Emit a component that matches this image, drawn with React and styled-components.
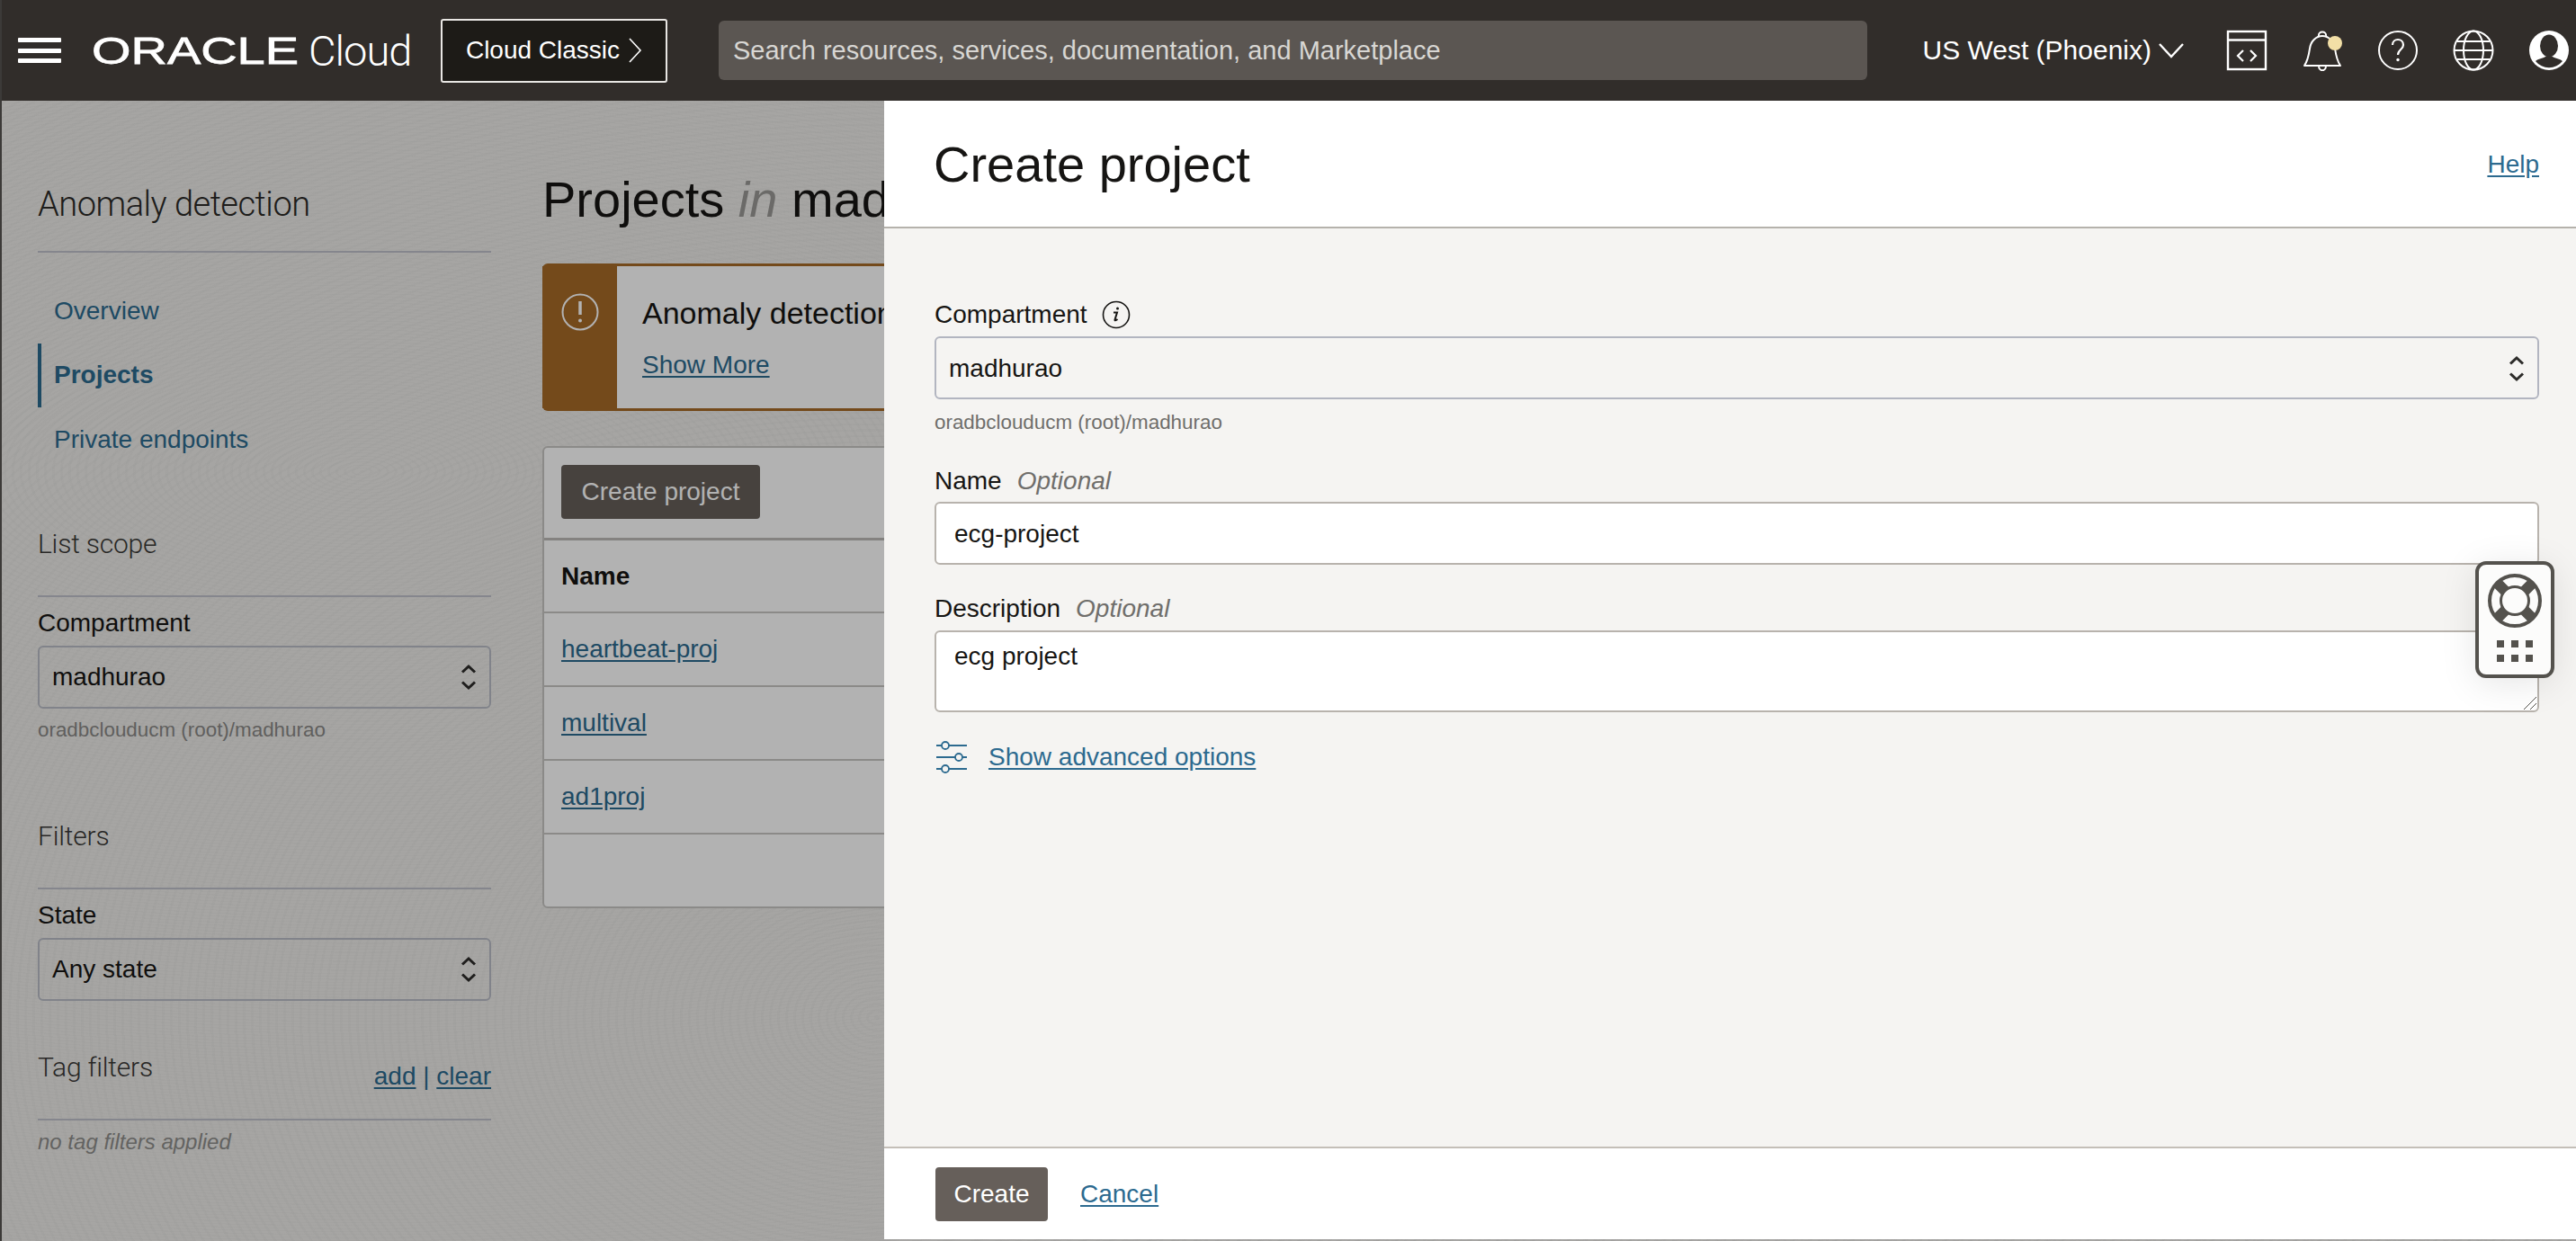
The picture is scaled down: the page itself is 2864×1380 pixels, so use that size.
import React from 'react'
import styled, { createGlobalStyle } from 'styled-components'

const GlobalStyle = createGlobalStyle`
  html, body {
    margin: 0;
    height: 100%;
    overflow: hidden;
  }
  body {
    font-family: "Liberation Sans", Arial, sans-serif;
    font-size: 28px;
    color: #161513;
  }
  * { box-sizing: border-box; }
`

const Page = styled.div`
  position: relative;
  height: 100vh;
  display: flex;
  flex-direction: column;
  overflow: hidden;
  border-left: 2px solid #3c3a38;
  background-color: #eeedea;
  background-image:
    repeating-radial-gradient(ellipse 52% 40% at 14% 38%, rgba(0,0,0,0.014) 0 3px, rgba(255,255,255,0.014) 3px 9px),
    repeating-radial-gradient(ellipse 30% 46% at 34% 82%, rgba(0,0,0,0.014) 0 3px, rgba(255,255,255,0.014) 3px 9px);
`

const TopBar = styled.header`
  flex: none;
  height: 112px;
  display: flex;
  align-items: center;
  padding: 0 7px 0 18px;
  background: #312d2a;
  color: #fff;
`

const Burger = styled.div`
  width: 48px;
  height: 28px;
  display: flex;
  flex-direction: column;
  justify-content: space-between;
  margin-right: 34px;

  span {
    display: block;
    height: 5px;
    border-radius: 1px;
    background: #fff;
  }
`

const Logo = styled.div`
  display: flex;
  align-items: center;
  width: 388px;
  gap: 11px;

  svg {
    overflow: visible;
  }
`

const CloudWord = styled.span`
  font-family: Roboto, "Liberation Sans", sans-serif;
  font-weight: 300;
  font-size: 47px;
  letter-spacing: -1px;
  line-height: 1;
`

const ClassicButton = styled.div`
  width: 252px;
  height: 71px;
  display: flex;
  align-items: center;
  justify-content: center;
  gap: 9px;
  border: 2px solid #e8e6e3;
  border-radius: 3px;
  background: #1d1b17;
  font-size: 28px;
`

const Search = styled.div`
  flex: 1;
  height: 66px;
  margin: 0 61px 0 57px;
  padding-left: 16px;
  display: flex;
  align-items: center;
  border-radius: 6px;
  background: #5b5652;
  color: #d8d6d3;
  font-size: 29px;
`

const Region = styled.div`
  display: flex;
  align-items: center;
  gap: 7px;
  margin-right: 46px;
  font-size: 30px;
`

const IconRow = styled.div`
  display: flex;
  gap: 38px;

  svg {
    display: block;
    width: 46px;
    height: 46px;
  }
`

const Workspace = styled.div`
  flex: 1;
  display: flex;
  min-height: 0;
  padding-left: 40px;
`

const Sidebar = styled.aside`
  flex: none;
  width: 504px;
  padding-top: 93px;
`

const ProductTitle = styled.h2`
  margin: 0;
  height: 76px;
  border-bottom: 2px solid #bfc1cb;
  font-family: Roboto, "Liberation Sans", sans-serif;
  font-weight: 300;
  font-size: 38px;
  line-height: 44px;
  letter-spacing: -0.5px;
  color: #2b2a28;
`

const Nav = styled.nav`
  margin: 29px 0 0;
`

const NavItem = styled.a`
  display: flex;
  align-items: center;
  height: 71.5px;
  padding-left: 14px;
  border-left: 4px solid ${p => (p.$active ? '#2c6a8f' : 'transparent')};
  color: #2c6a8f;
  font-weight: ${p => (p.$active ? 700 : 400)};
`

const SectionHead = styled.div`
  display: flex;
  justify-content: space-between;
  margin-top: ${p => p.$top}px;
  padding-bottom: 37px;
  border-bottom: 2px solid #bfc1cb;
`

const SectionTitle = styled.h3`
  margin: 0;
  font-family: Roboto, "Liberation Sans", sans-serif;
  font-weight: 300;
  font-size: 30px;
  line-height: 40px;
  letter-spacing: -0.2px;
  color: #3a3937;
`

const TagLinks = styled.div`
  align-self: flex-end;
  margin-bottom: -4px;
  line-height: 28px;
  color: #2c6a8f;

  a {
    text-decoration: underline;
    text-underline-offset: 3px;
  }
`

const SideLabel = styled.div`
  margin: 13px 0 9px;
  line-height: 32px;
`

const SelectBox = styled.div`
  height: 70px;
  display: flex;
  align-items: center;
  justify-content: space-between;
  padding: ${p => p.$nudge || 0}px 13px 0 14px;
  border: 2px solid ${p => p.$border};
  border-radius: 6px;
`

const Hint = styled.div`
  margin-top: ${p => p.$top}px;
  font-size: 22.4px;
  line-height: 28px;
  color: ${p => p.$color};
`

const NoTags = styled.div`
  margin-top: 10px;
  font-size: 24px;
  font-style: italic;
  line-height: 28px;
  color: #8f8e8c;
`

const Main = styled.main`
  flex: none;
  width: 380px;
  margin-left: 57px;
  padding-top: 78px;
  overflow: hidden;
`

const PageTitle = styled.h1`
  margin: 0;
  font-size: 56px;
  font-weight: 400;
  line-height: 64px;
  white-space: nowrap;

  em {
    color: #9a9996;
  }
`

const Notice = styled.section`
  display: flex;
  width: 1400px;
  height: 164px;
  margin-top: 39px;
  border: solid #a76a28;
  border-width: 3px 0;
  border-radius: 6px;
  background: #fff;
`

const NoticeBand = styled.div`
  flex: none;
  width: 83px;
  padding-top: 30px;
  display: flex;
  justify-content: center;
  align-items: flex-start;
  background: #a76a28;
`

const NoticeBody = styled.div`
  padding: 32px 28px 0;
`

const NoticeTitle = styled.div`
  font-size: 34px;
  line-height: 40px;
  white-space: nowrap;
`

const DocLink = styled.a`
  color: #2c6a8f;
  text-decoration: underline;
  text-underline-offset: 3px;
  white-space: nowrap;
`

const MoreLink = styled(DocLink)`
  display: block;
  margin-top: 22px;
`

const TableCard = styled.section`
  width: 1400px;
  margin-top: 39px;
  border: 2px solid #c8c6c3;
  border-radius: 6px;
  background: #fff;
`

const Toolbar = styled.div`
  height: 103px;
  padding-top: 19px;
  padding-left: 19px;
  border-bottom: 3px solid #bdbbb8;
`

const DarkButton = styled.div`
  display: inline-flex;
  align-items: center;
  justify-content: center;
  width: ${p => p.$width}px;
  height: 60px;
  border-radius: 4px;
  background: #665f5a;
  color: #fff;
`

const TableRow = styled.div`
  height: ${p => p.$height}px;
  display: flex;
  align-items: center;
  padding-left: 19px;
  border-bottom: ${p => (p.$last ? 'none' : '2px solid #c8c6c3')};
  font-weight: ${p => (p.$head ? 700 : 400)};
`

const Backdrop = styled.div`
  position: absolute;
  top: 112px;
  left: 0;
  right: 0;
  bottom: 0;
  background: rgba(0, 0, 0, 0.3);
`

const Drawer = styled.aside`
  position: absolute;
  top: 112px;
  left: 981px;
  right: 0;
  bottom: 2px;
  display: flex;
  flex-direction: column;
  background: #f5f4f2;
`

const DrawerHead = styled.div`
  flex: none;
  height: 142px;
  display: flex;
  align-items: center;
  justify-content: space-between;
  padding: 2px 41px 0 55px;
  border-bottom: 2px solid #b5b2ac;
  background: #fff;
`

const DrawerTitle = styled.h2`
  margin: 0;
  font-size: 56px;
  font-weight: 400;
  line-height: 64px;
`

const DrawerBody = styled.div`
  flex: 1;
  padding: 80px 41px 0 56px;
`

const FieldLabel = styled.div`
  display: flex;
  align-items: center;
  height: 32px;
  margin: ${p => p.$top}px 0 ${p => p.$bottom}px;
`

const Optional = styled.span`
  margin-left: 17px;
  font-style: italic;
  color: #6f6e6b;
`

const InfoBadge = styled.svg`
  width: 32px;
  height: 32px;
  margin-left: 16px;
`

const TextInput = styled.input`
  display: block;
  width: 100%;
  height: 70px;
  padding: 2px 20px 0;
  border: 2px solid #b8b3ad;
  border-radius: 6px;
  background: #fff;
  font: inherit;
  color: inherit;
  outline: none;
`

const TextAreaWrap = styled.div`
  position: relative;
  height: 91px;
`

const TextArea = styled.textarea`
  display: block;
  width: 100%;
  height: 100%;
  padding: 11px 20px;
  border: 2px solid #b8b3ad;
  border-radius: 6px;
  background: #fff;
  font: inherit;
  line-height: 32px;
  color: inherit;
  outline: none;
  resize: none;
`

const ResizeGrip = styled.svg`
  position: absolute;
  right: 3px;
  bottom: 3px;
  width: 15px;
  height: 15px;
`

const AdvancedRow = styled.div`
  display: flex;
  align-items: center;
  gap: 24px;
  margin-top: 32px;
  padding-left: 2px;
  line-height: 32px;
`

const DrawerFoot = styled.div`
  flex: none;
  height: 103px;
  display: flex;
  align-items: center;
  gap: 36px;
  padding-left: 57px;
  border-top: 2px solid #c4bfb8;
  background: #fff;
`

const HelpWidget = styled.div`
  position: absolute;
  top: 624px;
  left: 2750px;
  width: 88px;
  height: 130px;
  display: flex;
  flex-direction: column;
  align-items: center;
  padding-top: 10px;
  gap: 14px;
  border: 4px solid #54524d;
  border-radius: 12px;
  background: #fcfcfb;
  box-shadow: 0 6px 40px rgba(0, 0, 0, 0.1);
`

const Stepper = () => (
  <svg width="20" height="32" viewBox="0 0 20 32" fill="none" stroke="#2d2c2a" strokeWidth="3">
    <path d="M3 10.5 10 4l7 6.5M3 21.5 10 28l7-6.5" />
  </svg>
)

const CodeIcon = () => (
  <svg viewBox="0 0 46 46" fill="none" stroke="#fff" strokeWidth="2.4">
    <rect x="2" y="2" width="42" height="42" />
    <path d="M2 11.5h42" />
    <path d="M19 23l-6 6 6 6M27 23l6 6-6 6" strokeWidth="2.2" />
  </svg>
)

const BellIcon = () => (
  <svg viewBox="0 0 46 46" fill="none" stroke="#fff" strokeWidth="2">
    <path d="M3 40c4-6 5-12 6-19 1-8 7-14 14-14s13 6 14 14c1 7 2 13 6 19z" strokeLinejoin="round" />
    <path d="M19 7c-1-6 9-6 8 0M19 40c0 7 8 7 8 0" />
    <circle cx="37" cy="15" r="8" fill="#f2dfa6" stroke="none" />
  </svg>
)

const QuestionIcon = () => (
  <svg viewBox="0 0 46 46" fill="none" stroke="#fff" strokeWidth="2">
    <circle cx="23" cy="23" r="21" />
    <path d="M17 17c0-4 3-6 6-6s6 2 6 6c0 5-6 5-6 11" strokeWidth="2.2" />
    <circle cx="23" cy="33.500" r="1.700" fill="#fff" stroke="none" />
  </svg>
)

const GlobeIcon = () => (
  <svg viewBox="0 0 46 46" fill="none" stroke="#fff" strokeWidth="2">
    <circle cx="23" cy="23" r="21.500" />
    <ellipse cx="23" cy="23" rx="11" ry="21.500" />
    <path d="M5 13h36M1.500 23h43M5 33h36" />
  </svg>
)

const UserIcon = () => (
  <svg viewBox="0 0 46 46">
    <circle cx="23" cy="23" r="22" fill="#fff" />
    <ellipse cx="23" cy="18" rx="10" ry="12.500" fill="#312d2a" />
    <path d="M8 35c3-3 8-3 11-5h8c3 2 8 2 11 5A19.200 19.200 0 0 1 8 35z" fill="#312d2a" />
  </svg>
)

const AlertIcon = () => (
  <svg width="42" height="42" viewBox="0 0 42 42" fill="none" stroke="#fff" strokeWidth="2">
    <circle cx="21" cy="21" r="19.500" />
    <path d="M21 9v15" strokeWidth="3.500" />
    <circle cx="21" cy="30.500" r="2" fill="#fff" stroke="none" />
  </svg>
)

const SlidersIcon = () => (
  <svg width="34" height="36" viewBox="0 0 34 36" fill="none" stroke="#2c6a8f" strokeWidth="1.800">
    <circle cx="10" cy="5" r="4" />
    <circle cx="25" cy="18" r="4" />
    <circle cx="10" cy="31" r="4" />
    <path d="M0 5h6M14 5h20M0 18h21M29 18h5M0 31h6M14 31h20" />
  </svg>
)

const LifeBuoy = () => (
  <svg width="60" height="60" viewBox="0 0 60 60">
    <circle cx="30" cy="30" r="28" fill="#fcfcfb" stroke="#54524d" strokeWidth="4" />
    <path d="M10 10l13 13M50 10 37 23M10 50l13-13M50 50 37 37" stroke="#54524d" strokeWidth="12" />
    <circle cx="30" cy="30" r="15.500" fill="#fcfcfb" stroke="#54524d" strokeWidth="3" />
  </svg>
)

const DotGrid = () => (
  <svg width="40" height="24" viewBox="0 0 40 24" fill="#54524d">
    {[0, 16, 32].map(x => [0, 16].map(y => <rect key={`${x}-${y}`} x={x} y={y} width="8" height="8" />))}
  </svg>
)

const projects = ['heartbeat-proj', 'multival', 'ad1proj']

export default function App() {
  return (
    <Page>
      <GlobalStyle />
      <TopBar>
        <Burger><span /><span /><span /></Burger>
        <Logo>
          <svg width="230" height="44" viewBox="0 0 230 44">
            <text
              x="0"
              y="37"
              fill="#fff"
              stroke="#fff"
              strokeWidth="0.8"
              fontFamily="Liberation Sans"
              fontSize="43"
              textLength="230"
              lengthAdjust="spacingAndGlyphs"
            >
              ORACLE
            </text>
          </svg>
          <CloudWord>Cloud</CloudWord>
        </Logo>
        <ClassicButton>
          Cloud Classic
          <svg width="16" height="28" viewBox="0 0 16 28" fill="none" stroke="#fff" strokeWidth="1.600">
            <path d="M2 1l12 13L2 27" />
          </svg>
        </ClassicButton>
        <Search>Search resources, services, documentation, and Marketplace</Search>
        <Region>
          US West (Phoenix)
          <svg width="30" height="18" viewBox="0 0 30 18" fill="none" stroke="#fff" strokeWidth="2.400">
            <path d="M2 2l13 14L28 2" />
          </svg>
        </Region>
        <IconRow>
          <CodeIcon />
          <BellIcon />
          <QuestionIcon />
          <GlobeIcon />
          <UserIcon />
        </IconRow>
      </TopBar>

      <Workspace>
        <Sidebar>
          <ProductTitle>Anomaly detection</ProductTitle>
          <Nav>
            <NavItem>Overview</NavItem>
            <NavItem $active>Projects</NavItem>
            <NavItem>Private endpoints</NavItem>
          </Nav>

          <SectionHead $top={60}><SectionTitle>List scope</SectionTitle></SectionHead>
          <SideLabel>Compartment</SideLabel>
          <SelectBox $border="#b9bcc6">
            madhurao
            <Stepper />
          </SelectBox>
          <Hint $top={10} $color="#8a8987">oradbclouducm (root)/madhurao</Hint>

          <SectionHead $top={84}><SectionTitle>Filters</SectionTitle></SectionHead>
          <SideLabel>State</SideLabel>
          <SelectBox $border="#b9bcc6">
            Any state
            <Stepper />
          </SelectBox>

          <SectionHead $top={54}>
            <SectionTitle>Tag filters</SectionTitle>
            <TagLinks><a>add</a> | <a>clear</a></TagLinks>
          </SectionHead>
          <NoTags>no tag filters applied</NoTags>
        </Sidebar>

        <Main>
          <PageTitle>Projects <em>in</em> madhurao compartment</PageTitle>
          <Notice>
            <NoticeBand><AlertIcon /></NoticeBand>
            <NoticeBody>
              <NoticeTitle>Anomaly detection</NoticeTitle>
              <MoreLink>Show More</MoreLink>
            </NoticeBody>
          </Notice>
          <TableCard>
            <Toolbar><DarkButton $width={221}>Create project</DarkButton></Toolbar>
            <TableRow $height={81} $head>Name</TableRow>
            {projects.map(name => (
              <TableRow key={name} $height={82}><DocLink>{name}</DocLink></TableRow>
            ))}
            <TableRow $height={80} $last />
          </TableCard>
        </Main>
      </Workspace>

      <Backdrop />

      <Drawer>
        <DrawerHead>
          <DrawerTitle>Create project</DrawerTitle>
          <DocLink>Help</DocLink>
        </DrawerHead>
        <DrawerBody>
          <FieldLabel $top={0} $bottom={8}>
            Compartment
            <InfoBadge viewBox="0 0 32 32" fill="none" stroke="#161513" strokeWidth="1.600">
              <circle cx="16" cy="16" r="14.500" />
              <path d="M13 13.500h4l-2.500 8c-.3 1 .8 1.300 3 -.5" strokeWidth="2" />
              <circle cx="17.500" cy="9" r="1.500" fill="#161513" stroke="none" />
            </InfoBadge>
          </FieldLabel>
          <SelectBox $border="#b2b5c0" $nudge={2}>
            madhurao
            <Stepper />
          </SelectBox>
          <Hint $top={12} $color="#6f6e6b">oradbclouducm (root)/madhurao</Hint>

          <FieldLabel $top={35} $bottom={7}>Name<Optional>Optional</Optional></FieldLabel>
          <TextInput readOnly value="ecg-project" />

          <FieldLabel $top={33} $bottom={8}>Description<Optional>Optional</Optional></FieldLabel>
          <TextAreaWrap>
            <TextArea readOnly value="ecg project" />
            <ResizeGrip viewBox="0 0 15 15" fill="none" stroke="#54524d" strokeWidth="1">
              <path d="M1 15 15 1M8 15l7-7" />
            </ResizeGrip>
          </TextAreaWrap>

          <AdvancedRow>
            <SlidersIcon />
            <DocLink>Show advanced options</DocLink>
          </AdvancedRow>
        </DrawerBody>
        <DrawerFoot>
          <DarkButton $width={125}>Create</DarkButton>
          <DocLink>Cancel</DocLink>
        </DrawerFoot>
      </Drawer>

      <HelpWidget>
        <LifeBuoy />
        <DotGrid />
      </HelpWidget>
    </Page>
  )
}
